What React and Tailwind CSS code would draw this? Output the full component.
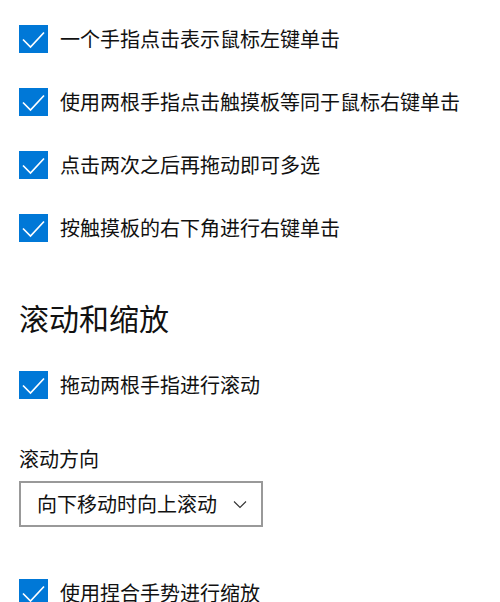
const font = { fontFamily: '"Noto Sans CJK SC", "Noto Sans", sans-serif' };

function Check({ label }) {
  return (
    <div className="flex items-center h-[28px] gap-[12px]">
      <span className="flex items-center justify-center w-[29px] h-[28px] bg-[#0078d7] shrink-0">
        <svg width="29" height="28" viewBox="0 0 29 28" fill="none">
          <path d="M4 14.5 L11.5 22 L25 7.5" stroke="white" strokeWidth="1.7" />
        </svg>
      </span>
      <span className="text-[20px] leading-none text-[#111]">{label}</span>
    </div>
  );
}

export default function App() {
  return (
    <div className="w-[500px] h-[602px] overflow-hidden bg-white pl-[19px] pt-[25px]" style={font}>
      <div className="flex flex-col gap-[35px]">
        <Check label="一个手指点击表示鼠标左键单击" />
        <Check label="使用两根手指点击触摸板等同于鼠标右键单击" />
        <Check label="点击两次之后再拖动即可多选" />
        <Check label="按触摸板的右下角进行右键单击" />
      </div>

      <h2 className="mt-[55px] text-[30px] leading-[40px] text-[#111]">滚动和缩放</h2>

      <div className="mt-[34px]">
        <Check label="拖动两根手指进行滚动" />
      </div>

      <div className="mt-[47px] text-[20px] leading-[26px] text-[#111]">滚动方向</div>

      <button className="mt-[9px] flex items-center w-[244px] h-[46px] border-2 border-[#999] pl-[16px] pr-[14px] justify-between">
        <span className="text-[20px] leading-none text-[#111]">向下移动时向上滚动</span>
        <svg width="14" height="9" viewBox="0 0 14 9" fill="none">
          <path d="M1 1.5 L7 7.5 L13 1.5" stroke="#333" strokeWidth="1.1" />
        </svg>
      </button>

      <div className="mt-[52px]">
        <Check label="使用捏合手势进行缩放" />
      </div>
    </div>
  );
}
